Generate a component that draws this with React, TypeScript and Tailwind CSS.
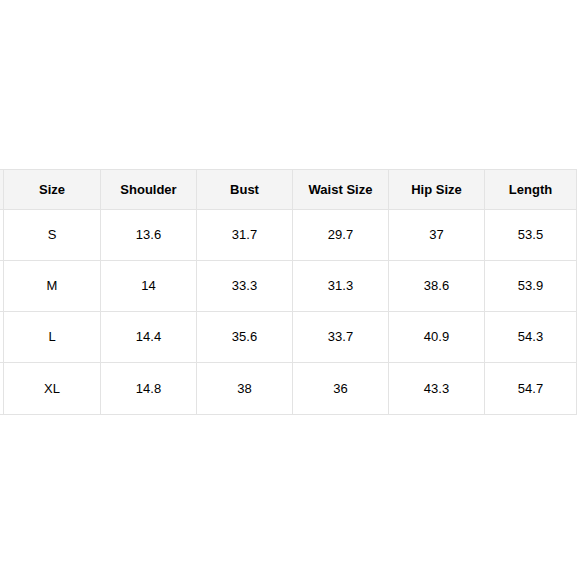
const headers = ["Size", "Shoulder", "Bust", "Waist Size", "Hip Size", "Length"];

const rows = [
  ["S", "13.6", "31.7", "29.7", "37", "53.5"],
  ["M", "14", "33.3", "31.3", "38.6", "53.9"],
  ["L", "14.4", "35.6", "33.7", "40.9", "54.3"],
  ["XL", "14.8", "38", "36", "43.3", "54.7"],
];

const widths = ["w-[97px]", "w-[96px]", "w-[96px]", "w-[96px]", "w-[96px]", "w-[93px] border-r"];

export default function App() {
  return (
    <div className="w-[580px] h-[580px] bg-white overflow-hidden pt-[169px] font-['Liberation_Sans',Arial,sans-serif] text-[13px] text-black">
      <div className="flex flex-col border-t border-b border-[#e3e3e3] w-[577px]">
        <div className="flex h-[40px] bg-[#f4f4f4] border-b border-[#e3e3e3]">
          <div className="w-[3px]" />
          {headers.map((h, i) => (
            <div
              key={h}
              className={`${widths[i]} shrink-0 border-l border-[#e3e3e3] flex items-center justify-center font-bold`}
            >
              {h}
            </div>
          ))}
        </div>
        {rows.map((r, ri) => (
          <div
            key={r[0]}
            className={`flex h-[51px] ${ri < rows.length - 1 ? "border-b border-[#e3e3e3]" : ""}`}
          >
            <div className="w-[3px]" />
            {r.map((c, i) => (
              <div
                key={i}
                className={`${widths[i]} shrink-0 border-l border-[#e3e3e3] flex items-center justify-center`}
              >
                {c}
              </div>
            ))}
          </div>
        ))}
      </div>
    </div>
  );
}
